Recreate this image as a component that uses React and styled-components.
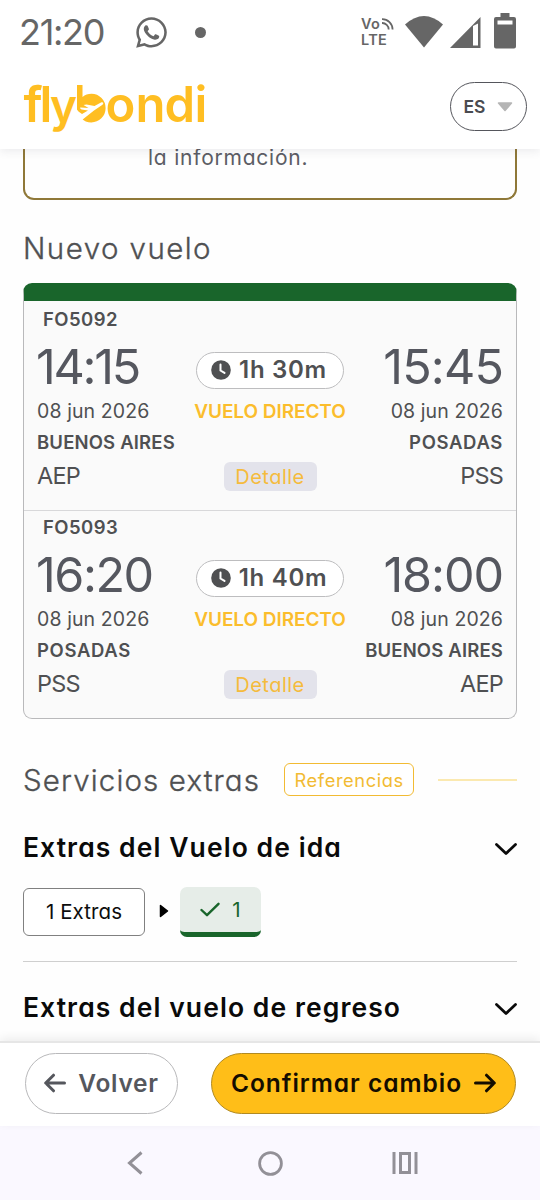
import React from "react";
import styled, { createGlobalStyle } from 'styled-components';
import { FaWhatsapp } from 'react-icons/fa';

const GlobalStyle = createGlobalStyle`
  * {
    box-sizing: border-box;
  }
  body {
    margin: 0;
    background-color: #fff;
    color: #4f5052;
    font-family: Inter, "Open Sans", sans-serif;
    font-feature-settings: 'cv11';
  }
  button {
    font: inherit;
    font-feature-settings: inherit;
    color: inherit;
    padding: 0;
  }
`

const Screen = styled.div`
  width: 540px;
  height: 1200px;
  display: flex;
  flex-direction: column;
  overflow: hidden;
  background-color: #fefefe;
`

const StatusBar = styled.div`
  position: relative;
  z-index: 1;
  flex: none;
  height: 64px;
  padding: 0 24px 0 19px;
  display: flex;
  align-items: center;
  color: #666;
  background-color: #fff;
`

const Clock = styled.span`
  width: 115px;
  font-size: 36px;
  line-height: 64px;
  letter-spacing: -0.036em;
`

const Dot = styled.span`
  width: 11px;
  height: 11px;
  margin-left: 26px;
  border-radius: 50%;
  background-color: #666;
`

const StatusIcons = styled.div`
  margin-left: auto;
  display: flex;
  align-items: center;
`

const Volte = styled.div`
  display: flex;
  flex-direction: column;
  width: 44px;
  font-size: 14.5px;
  line-height: 16px;
  font-weight: 600;
  letter-spacing: 0.02em;
`

const VolteTop = styled.span`
  display: flex;
  align-items: center;
  gap: 2px;
`

const Signal = styled.svg`
  margin-left: 7px;
`

const Battery = styled.svg`
  margin: -3px 0 0 13px;
`

const Header = styled.header`
  position: relative;
  flex: none;
  height: 85px;
  padding: 18px 13px 0 24px;
  display: flex;
  justify-content: space-between;
  align-items: flex-start;
  background-color: #fff;
  box-shadow: 0 2px 9px rgba(60, 60, 80, 0.1);
`

const LogoMark = styled.svg`
  margin-top: 2px;
  overflow: visible;
`

const LanguageButton = styled.button`
  width: 77px;
  height: 49px;
  display: flex;
  align-items: center;
  justify-content: center;
  gap: 12px;
  border: 1.5px solid #55565c;
  border-radius: 25px;
  background-color: #fff;
  color: #4a4b50;
  font-size: 17.5px;
  font-weight: 600;
`

const Content = styled.main`
  flex: none;
  height: 892px;
  padding: 0 23px;
`

const InfoBox = styled.div`
  height: 51px;
  padding-left: 123px;
  border: 2px solid #8f7838;
  border-top: none;
  border-radius: 0 0 11px 11px;
  font-size: 21px;
  line-height: 18px;
  letter-spacing: 0.037em;
  font-weight: 400;
  color: #5c5d65;
`

const SectionTitle = styled.h2`
  margin: 0;
  font-size: 29.5px;
  line-height: 36px;
  font-weight: 300;
  -webkit-text-stroke: 0.35px #4f5052;
  letter-spacing: ${props => props.spacing}em;
  white-space: nowrap;
`

const NewFlightTitle = styled(SectionTitle)`
  margin-top: 30px;
`

const FlightCard = styled.section`
  margin-top: 17px;
  border: 1px solid #b9b9bb;
  border-top: 18px solid #19652b;
  border-radius: 9px;
  background-color: #fafafa;
`

const Segment = styled.article`
  padding: ${props => props.first ? '8px' : '6px'} 13px 19px;
  border-bottom: ${props => props.first ? '1px solid #d8d8da' : 'none'};
`

const FlightNumber = styled.div`
  padding-left: 6px;
  font-size: 18.5px;
  line-height: 20px;
  font-weight: 600;
  letter-spacing: 0.025em;
`

const SegmentRow = styled.div`
  display: grid;
  grid-template-columns: 1fr 152px 1fr;
`

const Stop = styled.div`
  display: flex;
  flex-direction: column;
  align-items: ${props => props.end ? 'flex-end' : 'flex-start'};
  white-space: nowrap;
`

const Time = styled.span`
  margin: 12px 0 0 -1px;
  font-size: 48.5px;
  line-height: 52px;
  font-weight: 400;
  letter-spacing: ${props => props.spacing}em;
  color: #55575f;
`

const FlightDate = styled.span`
  margin-top: 5px;
  font-size: 19.5px;
  line-height: 26px;
  font-weight: 400;
  letter-spacing: 0.005em;
`

const City = styled.span`
  margin-top: -1px;
  font-size: 18.5px;
  line-height: 38px;
  font-weight: 600;
  letter-spacing: ${props => props.spacing}em;
`

const Airport = styled.span`
  font-size: 23.5px;
  line-height: 29px;
  font-weight: 400;
  letter-spacing: -0.035em;
`

const Middle = styled.div`
  display: flex;
  flex-direction: column;
  align-items: center;
  white-space: nowrap;
`

const Duration = styled.div`
  width: 148px;
  height: 37px;
  margin-top: 23px;
  padding: 0 2px 2px 0;
  display: flex;
  align-items: center;
  justify-content: center;
  gap: 8px;
  border: 1.5px solid #bdbdbf;
  border-radius: 19px;
  background-color: #fff;
  font-size: 24px;
  font-weight: 600;
  letter-spacing: 0.03em;
`

const FlightType = styled.span`
  margin-top: 10px;
  font-size: 19px;
  line-height: 26px;
  font-weight: 600;
  letter-spacing: -0.003em;
  color: #fbbd2c;
`

const DetailButton = styled.button`
  width: 93px;
  height: 29px;
  margin-top: 37px;
  border: none;
  border-radius: 6px;
  background-color: #e3e3eb;
  color: #f5bb3c;
  font-size: 20px;
  letter-spacing: 0.024em;
`

const ExtrasHeading = styled.div`
  height: 33px;
  margin-top: 44px;
  display: flex;
  align-items: center;
`

const ReferencesButton = styled.button`
  width: 130px;
  height: 33px;
  margin-left: 24px;
  flex: none;
  border: 1.5px solid #f2bb33;
  border-radius: 6px;
  background-color: #fff;
  color: #f2bb33;
  font-size: 18.3px;
  font-weight: 400;
  letter-spacing: 0.032em;
`

const HeadingLine = styled.span`
  width: 79px;
  height: 2px;
  margin-left: auto;
  background-color: #fbe9b0;
`

const AccordionRow = styled.div`
  height: 36px;
  margin-top: ${props => props.top}px;
  display: flex;
  align-items: center;
  justify-content: space-between;
`

const AccordionTitle = styled.h3`
  margin: 0;
  font-size: 26.5px;
  line-height: 36px;
  font-weight: 600;
  letter-spacing: 0.0405em;
  color: #0a0a0a;
  white-space: nowrap;
`

const ChevronIcon = styled.svg`
  margin-top: 3px;
`

const ExtrasRow = styled.div`
  height: 75px;
  margin-top: 22px;
  display: flex;
  align-items: flex-start;
  border-bottom: 1.5px solid #cfcfcf;
`

const ExtrasCount = styled.div`
  width: 122px;
  height: 48px;
  margin: 1px 14px 0 0;
  padding-bottom: 2px;
  display: flex;
  align-items: center;
  justify-content: center;
  border: 1.5px solid #808080;
  border-radius: 6px;
  background-color: #fff;
  color: #0d0d0d;
  font-size: 20.5px;
  font-weight: 400;
  letter-spacing: 0.004em;
`

const ExtrasArrow = styled.svg`
  margin-top: 17px;
`

const ExtrasChecked = styled.div`
  width: 81px;
  height: 50px;
  margin-left: 11px;
  display: flex;
  align-items: center;
  justify-content: center;
  gap: 12px;
  border-bottom: 5px solid #19652b;
  border-radius: 7px;
  background-color: #e6ede8;
  color: #19652b;
  font-size: 20.5px;
`

const Footer = styled.footer`
  position: relative;
  flex: none;
  height: 85px;
  padding: 10px 24px 0 25px;
  display: flex;
  justify-content: space-between;
  border-top: 2px solid #e6e6e6;
  background-color: #fff;
  box-shadow: 0 -3px 9px rgba(0, 0, 0, 0.07);
`

const ActionButton = styled.button`
  width: ${props => props.primary ? '305px' : '153px'};
  height: 61px;
  padding-bottom: 1px;
  display: flex;
  align-items: center;
  justify-content: center;
  gap: 12px;
  border: 1.5px solid ${props => props.primary ? '#b18a22' : '#b9b9bb'};
  border-radius: 31px;
  background-color: ${props => props.primary ? '#ffbe18' : '#fff'};
  color: ${props => props.primary ? '#140d00' : '#55575d'};
  font-size: 24.5px;
  font-weight: 600;
  letter-spacing: ${props => props.primary ? '0.04em' : '0.03em'};
  white-space: nowrap;
`

const NavBar = styled.nav`
  flex: none;
  height: 74px;
  display: grid;
  grid-template-columns: repeat(3, 135px);
  justify-content: center;
  place-items: center;
  background-color: #faf8ff;
`

const flights = [
  {
    number: 'FO5092',
    duration: '1h 30m',
    from: { time: '14:15', spacing: -0.046, city: 'BUENOS AIRES', citySpacing: 0.009, code: 'AEP' },
    to: { time: '15:45', spacing: -0.018, city: 'POSADAS', citySpacing: 0.035, code: 'PSS' }
  },
  {
    number: 'FO5093',
    duration: '1h 40m',
    from: { time: '16:20', spacing: -0.03, city: 'POSADAS', citySpacing: 0.035, code: 'PSS' },
    to: { time: '18:00', spacing: -0.022, city: 'BUENOS AIRES', citySpacing: 0.009, code: 'AEP' }
  }
]

const Logo = () => (
  <LogoMark width="186" height="48" viewBox="0 0 186 48" fill="#ffbe22">
    <g fontFamily="Inter, sans-serif" fontSize="49" fontWeight="600">
      <text x="-0.5 15.5" y="38">fl</text>
      <text x="26" y="38" fontSize="46">y</text>
      <text x="81.500 111.500 140.500 170.500" y="38">ondi</text>
    </g>
    <path d="M53 1h5.500v12c2.500-2 5.500-3.200 9-3.200a14.300 14.300 0 1 1-14.500 14.300z" />
    <path d="M52 27l4.500-3.500 8 .5-5-3 3-.5 8 1.500 6.500-3.500c2-.8 3.200.8 1.500 2.200L70 26.500l-9.500 7.500-3 2.500-5-4z" fill="#fff" />
    <path d="M53 21.500l4.500 4 6.500 1-6 3.500c-2.500-1.500-4.500-3-5-5z" />
  </LogoMark>
)

const ClockIcon = () => (
  <svg width="20" height="20" viewBox="0 0 20 20">
    <circle cx="10" cy="10" r="9.800" fill="#4f5052" />
    <path d="M9.500 4.500v6l4 2.400" fill="none" stroke="#fff" strokeWidth="2" strokeLinecap="round" />
  </svg>
)

const Chevron = () => (
  <ChevronIcon width="22" height="14" viewBox="0 0 22 14">
    <path d="M1.500 2.500L11 11.500L20.500 2.500" fill="none" stroke="#0a0a0a" strokeWidth="2.800" strokeLinecap="round" strokeLinejoin="round" />
  </ChevronIcon>
)

const Arrow = ({ left }) => (
  <svg width="22" height="20" viewBox="0 0 22 20" fill="none" stroke="currentColor" strokeWidth="3" strokeLinecap="round" strokeLinejoin="round">
    {left ? <path d="M20.500 10H2M9.500 2.200L1.700 10l7.800 7.800" /> : <path d="M1.500 10H20M12.500 2.200L20.300 10l-7.800 7.800" />}
  </svg>
)

const FlightStop = ({ stop, end }) => (
  <Stop end={end}>
    <Time spacing={stop.spacing}>{stop.time}</Time>
    <FlightDate>08 jun 2026</FlightDate>
    <City spacing={stop.citySpacing}>{stop.city}</City>
    <Airport>{stop.code}</Airport>
  </Stop>
)

class App extends React.Component {
  render() {
    return (
      <>
        <GlobalStyle />
        <Screen>
          <StatusBar>
            <Clock>21:20</Clock>
            <FaWhatsapp size={35} />
            <Dot />
            <StatusIcons>
              <Volte>
                <VolteTop>
                  Vo
                  <svg width="12" height="12" viewBox="0 0 12 12" fill="none" stroke="#666" strokeWidth="1.800">
                    <path d="M0 1.200A10.300 10.300 0 0 1 10.600 11.500M0 5A6.500 6.500 0 0 1 6.700 11.500" />
                  </svg>
                </VolteTop>
                LTE
              </Volte>
              <svg width="38" height="32" viewBox="0 0 38 32" fill="#666">
                <path d="M0 8.500Q19-8.500 38 8.500L19 31.500z" />
              </svg>
              <Signal width="31" height="31" viewBox="0 0 31 31" fill="#666">
                <path fillRule="evenodd" d="M30.500 0v31H0zM23 9v19.500h5V6.500z" />
              </Signal>
              <Battery width="22" height="36" viewBox="0 0 22 36" fill="#666">
                <path fillRule="evenodd" d="M6.500 0h9v4H20a2 2 0 0 1 2 2v27.500a2 2 0 0 1-2 2H2a2 2 0 0 1-2-2V6a2 2 0 0 1 2-2h4.500zM3.500 7.500v4h15v-4z" />
              </Battery>
            </StatusIcons>
          </StatusBar>
          <Header>
            <Logo />
            <LanguageButton>
              ES
              <svg width="16" height="10" viewBox="0 0 16 10">
                <path d="M1.500 1h13L8 8.500z" fill="#b5b5b5" stroke="#b5b5b5" strokeWidth="1.500" strokeLinejoin="round" />
              </svg>
            </LanguageButton>
          </Header>
          <Content>
            <InfoBox>la información.</InfoBox>
            <NewFlightTitle spacing={0.049}>Nuevo vuelo</NewFlightTitle>
            <FlightCard>
              {flights.map((flight, index) =>
                <Segment key={flight.number} first={index === 0}>
                  <FlightNumber>{flight.number}</FlightNumber>
                  <SegmentRow>
                    <FlightStop stop={flight.from} />
                    <Middle>
                      <Duration><ClockIcon />{flight.duration}</Duration>
                      <FlightType>VUELO DIRECTO</FlightType>
                      <DetailButton>Detalle</DetailButton>
                    </Middle>
                    <FlightStop stop={flight.to} end />
                  </SegmentRow>
                </Segment>
              )}
            </FlightCard>
            <ExtrasHeading>
              <SectionTitle spacing={0.0385}>Servicios extras</SectionTitle>
              <ReferencesButton>Referencias</ReferencesButton>
              <HeadingLine />
            </ExtrasHeading>
            <AccordionRow top={33}>
              <AccordionTitle>Extras del Vuelo de ida</AccordionTitle>
              <Chevron />
            </AccordionRow>
            <ExtrasRow>
              <ExtrasCount>1 Extras</ExtrasCount>
              <ExtrasArrow width="10" height="14" viewBox="0 0 10 14">
                <path d="M1.500 1.500v11L8.500 7z" fill="#000" stroke="#000" strokeWidth="1.500" strokeLinejoin="round" />
              </ExtrasArrow>
              <ExtrasChecked>
                <svg width="20" height="15" viewBox="0 0 20 15">
                  <path d="M1.500 8l5.500 5.200L18.500 1.800" fill="none" stroke="#19652b" strokeWidth="2.400" strokeLinecap="round" strokeLinejoin="round" />
                </svg>
                1
              </ExtrasChecked>
            </ExtrasRow>
            <AccordionRow top={27}>
              <AccordionTitle>Extras del vuelo de regreso</AccordionTitle>
              <Chevron />
            </AccordionRow>
          </Content>
          <Footer>
            <ActionButton><Arrow left />Volver</ActionButton>
            <ActionButton primary>Confirmar cambio<Arrow /></ActionButton>
          </Footer>
          <NavBar>
            <svg width="16" height="24" viewBox="0 0 16 24">
              <path d="M14.500 1.500L2.500 12l12 10.500" fill="none" stroke="#929097" strokeWidth="3" />
            </svg>
            <svg width="25" height="25" viewBox="0 0 25 25">
              <circle cx="12.500" cy="12.500" r="10.900" fill="none" stroke="#929097" strokeWidth="2.800" />
            </svg>
            <svg width="26" height="22" viewBox="0 0 26 22" fill="none" stroke="#929097" strokeWidth="3">
              <path d="M2 0v22M24 0v22M8.500 1.500h9v19h-9z" />
            </svg>
          </NavBar>
        </Screen>
      </>
    )
  }
}

export default App
